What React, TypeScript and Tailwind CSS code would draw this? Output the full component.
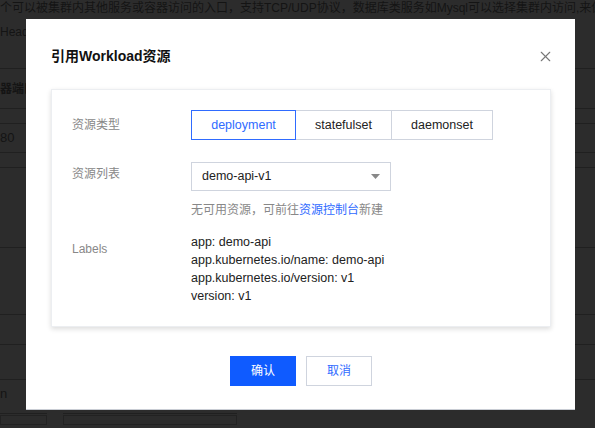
import React, { useState } from 'react';
import { X } from 'lucide-react';

const font = { fontFamily: '"Liberation Sans", Arial, "Noto Sans CJK SC", sans-serif' };

const types = ['deployment', 'statefulset', 'daemonset'];

const labels = [
  'app: demo-api',
  'app.kubernetes.io/name: demo-api',
  'app.kubernetes.io/version: v1',
  'version: v1',
];

const PageBehind: React.FC = () => (
  <div className="flex flex-col text-[12px] text-[#141414]">
    <div className="h-[17px] leading-[17px] whitespace-nowrap">
      个可以被集群内其他服务或容器访问的入口，支持TCP/UDP协议，数据库类服务如Mysql可以选择集群内访问,来保
    </div>
    <div className="h-[52px] flex items-center border-b border-[#202020] pb-[22px]">Head</div>
    <div className="h-[40px] flex items-center border-b border-[#202020] font-bold">器端口</div>
    <div className="h-[15px] border-b border-[#202020]" />
    <div className="h-[29px] flex items-center border-b border-[#202020] text-[13px]">80</div>
    <div className="h-[15px] border-b border-[#202020]" />
    <div className="h-[80px] border-b border-[#202020]" />
    <div className="h-[67px] border-b border-[#202020]" />
    <div className="h-[30px] border-b border-[#202020]" />
    <div className="h-[35px] border-b border-[#202020]" />
    <div className="h-[27px] flex items-center text-[13px]">n</div>
    <div className="flex gap-[16px] mt-[1px]">
      <div className="w-[47px] h-[6px] border-b border-[#202020]" />
      <div className="w-[174px] h-[6px] border-b border-[#202020]" />
    </div>
    <div className="flex gap-[16px] mt-[1px]">
      <div className="w-[47px] h-[10px] border border-[#222]" />
      <div className="w-[174px] h-[10px] border border-[#222]" />
    </div>
  </div>
);

export default function App() {
  const [active, setActive] = useState('deployment');

  return (
    <div className="relative w-[595px] h-[428px] overflow-hidden bg-[#2c2c2c]" style={font}>
      <PageBehind />

      <div className="absolute left-[26px] top-[19px] w-[549px] h-[391px] bg-white border-b border-[#c9cdd4] flex flex-col pt-[27px] pl-[25px] pr-[24px]">
        <div className="h-[20px] flex items-center justify-between">
          <div className="text-[14px] font-bold text-[#111]">引用Workload资源</div>
          <X size={17} strokeWidth={1.6} className="text-[#777] mr-[-3px]" />
        </div>

        <div className="mt-[23px] bg-white border border-[#eceef1] shadow-[0_2px_5px_rgba(0,0,0,0.14)] pt-[20px] pb-[21px] pl-[20px] flex flex-col text-[12px]">
          <div className="flex items-center h-[30px]">
            <div className="w-[119px] text-[#888]">资源类型</div>
            <div className="flex">
              {types.map((t, i) => (
                <button
                  key={t}
                  onClick={() => setActive(t)}
                  className={`h-[30px] text-[12.5px] ${i === 0 ? 'w-[105px]' : i === 1 ? 'w-[96px]' : 'w-[101px]'} ${
                    active === t
                      ? 'border border-[#2f6bff] text-[#2f6bff] relative z-10'
                      : `border-y border-r border-[#cfd4de] text-[#222] ${i === 1 ? 'border-l-0' : ''}`
                  }`}
                >
                  {t}
                </button>
              ))}
            </div>
          </div>

          <div className="flex mt-[22px]">
            <div className="w-[119px] text-[#888] pt-[3px]">资源列表</div>
            <div className="flex flex-col">
              <div className="w-[200px] h-[29px] border border-[#cfd4de] flex items-center justify-between pl-[10px] pr-[10px]">
                <span className="text-[12.5px] text-[#222]">demo-api-v1</span>
                <svg width="9" height="5" viewBox="0 0 9 5">
                  <path d="M0 0 L9 0 L4.5 5 Z" fill="#888" />
                </svg>
              </div>
              <div className="mt-[11px] leading-[16px] text-[#888]">
                无可用资源，可前往<span className="text-[#2f6bff]">资源控制台</span>新建
              </div>
            </div>
          </div>

          <div className="flex mt-[15px]">
            <div className="w-[119px] text-[#888] pt-[7px] leading-[18px]">Labels</div>
            <div className="flex flex-col leading-[18px] text-[12.5px] text-[#222]">
              {labels.map((l) => (
                <div key={l}>{l}</div>
              ))}
            </div>
          </div>
        </div>

        <div className="mt-[29px] flex justify-center gap-[10px] text-[12px]">
          <button className="w-[66px] h-[30px] bg-[#0f5bff] text-white">确认</button>
          <button className="w-[66px] h-[30px] bg-white border border-[#cfd4de] text-[#2f6bff]">取消</button>
        </div>
      </div>
    </div>
  );
}
